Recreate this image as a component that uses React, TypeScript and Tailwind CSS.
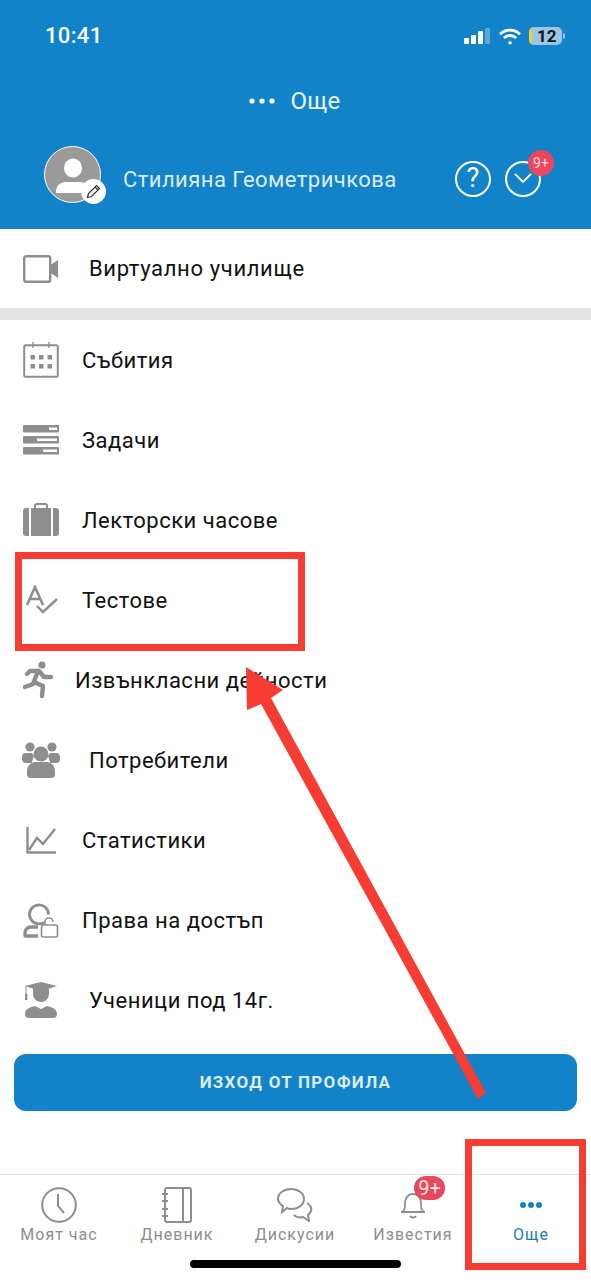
import React from "react";

const G = "#8e8e8e";

function Row({ icon, label, ml = "ml-[22px]" }: { icon: React.ReactNode; label: string; ml?: string }) {
  return (
    <div className="flex h-20 items-center pl-[22px]">
      <div className="flex w-[38px] shrink-0 items-center justify-center">{icon}</div>
      <span className={`${ml} pt-[2px] text-[22px] leading-none text-[#111] tracking-[0.5px]`}>{label}</span>
    </div>
  );
}

const Calendar = () => (
  <svg width="36" height="36" viewBox="0 0 36 36" fill="none">
    <rect x="1.2" y="3.2" width="33.6" height="31.6" rx="1.5" stroke={G} strokeWidth="2" />
    <path d="M10 0v6M26 0v6" stroke={G} strokeWidth="1.4" />
    {[7.5, 16, 24.5].map((x) => [13, 22].map((y) => <rect key={`${x}-${y}`} x={x} y={y} width="4.5" height="4.5" fill={G} />))}
  </svg>
);
const Tasks = () => (
  <svg width="36" height="30" viewBox="0 0 36 30" fill={G}>
    <rect y="0" width="36" height="7.5" rx="1" />
    <rect y="11" width="36" height="7.5" rx="1" />
    <rect y="22" width="36" height="7.5" rx="1" />
    <rect x="26" y="2.5" width="8" height="2.5" fill="#fff" />
    <rect x="14" y="13.5" width="20" height="2.5" fill="#fff" />
    <rect x="20" y="24.5" width="14" height="2.5" fill="#fff" />
  </svg>
);
const Case = () => (
  <svg width="36" height="34" viewBox="0 0 36 34" fill={G}>
    <path d="M12 6V3a2 2 0 0 1 2-2h8a2 2 0 0 1 2 2v3" fill="none" stroke={G} strokeWidth="2" />
    <path d="M3 5h3v28H3a3 3 0 0 1-3-3V8a3 3 0 0 1 3-3zM8 5h20v28H8zM30 5h3a3 3 0 0 1 3 3v22a3 3 0 0 1-3 3h-3z" />
  </svg>
);
const Spell = () => (
  <svg width="38" height="30" viewBox="0 0 38 30" fill="none" stroke={G}>
    <path d="M5 20 13 2l8 18M8 14h10" strokeWidth="2.6" />
    <path d="M15 21l6 6L35 14" strokeWidth="2.4" />
  </svg>
);
const Runner = () => (
  <svg width="38" height="38" viewBox="0 0 38 38" fill="none" stroke={G} strokeWidth="4.4" strokeLinecap="round" strokeLinejoin="round">
    <circle cx="20" cy="4" r="3.6" fill={G} stroke="none" />
    <path d="M5 13l3-3h9l5 6h7" />
    <path d="M16 10l-5 13-8 3" />
    <path d="M12 21l9 4-1 10" />
  </svg>
);
const Users = () => (
  <svg width="38" height="36" viewBox="0 0 38 36" fill={G}>
    <circle cx="8" cy="5" r="4.6" />
    <circle cx="30" cy="5" r="4.6" />
    <path d="M4 11h6l2 3-2 6v1H4a4 4 0 0 1-4-4v-2a4 4 0 0 1 4-4zM28 11h6a4 4 0 0 1 4 4v2a4 4 0 0 1-4 4h-6v-1l-2-6z" />
    <circle cx="19" cy="12" r="7.5" />
    <path d="M9 36a4 4 0 0 1-4-4v-3c0-6 5-9 9-9h10c4 0 9 3 9 9v3a4 4 0 0 1-4 4z" />
  </svg>
);
const Chart = () => (
  <svg width="30" height="27" viewBox="0 0 30 27" fill="none" stroke={G} strokeWidth="2.4">
    <path d="M1.5 0v25.5H30" />
    <path d="M3 23l8-12 6 6L29 2" />
  </svg>
);
const Access = () => (
  <svg width="36" height="36" viewBox="0 0 36 36" fill="none" stroke={G}>
    <path d="M21 20.5a9.5 9.5 0 1 1 4.5-8" strokeWidth="2.8" />
    <path d="M15 25H8c-3.500 0-6 2.500-6 6v2.500a.5.5 0 0 0 .5.5H15" strokeWidth="3.4" />
    <rect x="18.500" y="23" width="16" height="12" rx="2" strokeWidth="1.6" />
    <path d="M22 23v-3a4 4 0 0 1 8 0" strokeWidth="1.6" />
  </svg>
);
const Grad = () => (
  <svg width="32" height="36" viewBox="0 0 32 36" fill={G}>
    <path d="M0 4 16 0l16 4-9 3H9z" />
    <path d="M1 4v9" stroke={G} strokeWidth="1" />
    <rect x="0" y="12" width="2.400" height="6" />
    <path d="M8 7h16v5a8 8 0 0 1-16 0z" />
    <path d="M4 36a4 4 0 0 1-4-4c0-5 5-7 10-8l6 3 6-3c5 1 10 3 10 8a4 4 0 0 1-4 4z" />
  </svg>
);

function Tab({ icon, label, blue }: { icon: React.ReactNode; label: string; blue?: boolean }) {
  return (
    <div className="flex w-[118px] flex-col items-center">
      <div className="flex h-[40px] items-center justify-center">{icon}</div>
      <span className={`text-[16px] leading-5 tracking-[1px] ${blue ? "text-[#1a7cb8]" : "text-[#8d8d8d]"}`}>{label}</span>
    </div>
  );
}

export default function App() {
  return (
    <div className="relative h-[1280px] w-[591px] overflow-hidden bg-white font-['Roboto','Liberation_Sans',sans-serif]">
      <header className="h-[229px] bg-[#1283c9] text-white">
        <div className="flex items-center justify-between pl-[45px] pr-[26px] pt-[23px]">
          <span className="text-[22px] font-medium leading-[26px] tracking-[0.35px]">10:41</span>
          <div className="flex items-center gap-[7px]">
            <svg width="27" height="16" viewBox="0 0 27 16" fill="#fff">
              <rect x="0" y="10" width="5" height="6" rx="1" />
              <rect x="7" y="7" width="5" height="9" rx="1" />
              <rect x="14" y="3" width="5" height="13" rx="1" />
              <rect x="21" y="0" width="5" height="16" rx="1" fill="#5aa7d8" />
            </svg>
            <svg width="24" height="17" viewBox="0 0 24 18" fill="none" stroke="#fff" strokeWidth="3">
              <path d="M1.500 6.500a15 15 0 0 1 21 0M5.500 10.500a9.500 9.500 0 0 1 13 0" />
              <circle cx="12" cy="15.500" r="1.600" fill="#fff" strokeWidth="0.5" />
            </svg>
            <div className="flex items-center gap-[1px]">
              <div className="relative flex h-[18px] w-[33px] items-center overflow-hidden rounded-[5px] bg-[#9dc5e4] pl-[8px] text-[17px] font-bold leading-none text-[#101820]">
                <span className="absolute bottom-0 left-0 top-0 w-[3px] bg-[#f5cf2b]" />
                12
              </div>
              <span className="h-[6px] w-[2px] rounded-r-full bg-[#9dc5e4]" />
            </div>
          </div>
        </div>
        <div className="mt-[37px] flex items-center justify-center pr-[2px]">
          <svg width="28" height="8" viewBox="0 0 28 8" fill="#fff">
            <circle cx="4" cy="4" r="2.600" />
            <circle cx="14" cy="4" r="2.600" />
            <circle cx="24" cy="4" r="2.600" />
          </svg>
          <span className="ml-[14px] text-[24px] leading-[30px] tracking-[0.3px] text-[#e8f3fa]">Още</span>
        </div>
        <div className="mt-[30px] flex items-center pl-[44px]">
          <div className="relative h-[57px] w-[57px] shrink-0">
            <div className="h-[57px] w-[57px] overflow-hidden rounded-full border border-white bg-[#9a9a9a]">
              <svg width="55" height="55" viewBox="0 0 55 55" fill="#fff">
                <ellipse cx="28" cy="21" rx="9" ry="9.500" />
                <path d="M11 45c0-8 6-10 11-10h12c5 0 11 2 11 10v1H11z" />
              </svg>
            </div>
            <div className="absolute bottom-[-1px] right-[-5px] flex h-[25px] w-[25px] items-center justify-center rounded-full bg-white">
              <svg width="15" height="15" viewBox="0 0 15 15" fill="none" stroke="#333" strokeWidth="1.200">
                <path d="M1.500 13.500l1-4L10.500 1.500l3 3-8 8zM9 3l3 3" />
              </svg>
            </div>
          </div>
          <span className="ml-[22px] mt-[10px] w-[273px] whitespace-nowrap text-[22px] leading-7 tracking-[0.45px] text-[#dcedf8]">Стилияна Геометричкова</span>
          <div className="ml-[59px] mt-[8px] flex h-[36px] w-[36px] items-center justify-center rounded-full border-2 border-white text-[27px] font-normal leading-none">?</div>
          <div className="relative ml-[14px] mt-[8px] flex h-[36px] w-[36px] items-center justify-center rounded-full border-2 border-white">
            <svg width="18" height="11" viewBox="0 0 18 11" fill="none" stroke="#fff" strokeWidth="1.800">
              <path d="M1 1l8 8 8-8" />
            </svg>
            <span className="absolute right-[-15px] top-[-13px] flex h-[26px] w-[26px] items-center justify-center rounded-full bg-[#e8485c] text-[14px] leading-none text-[#f6d5d9]">9+</span>
          </div>
        </div>
      </header>

      <div className="flex h-[79px] items-center pl-[23px]">
        <svg width="36" height="28" viewBox="0 0 36 28" fill="none" stroke={G} strokeWidth="2.400">
          <rect x="1.200" y="1.200" width="26" height="25.600" rx="2" />
          <path d="M28 11l6-4v14l-6-4z" strokeWidth="2.200" fill={G} />
        </svg>
        <span className="ml-[30px] text-[22px] leading-none tracking-[0.65px] text-[#111]">Виртуално училище</span>
      </div>
      <div className="h-3 bg-[#e4e4e4]" />

      <Row icon={<Calendar />} label="Събития" />
      <Row icon={<Tasks />} label="Задачи" />
      <Row icon={<Case />} label="Лекторски часове" />
      <Row icon={<Spell />} label="Тестове" />
      <Row icon={<Runner />} label="Извънкласни дейности" ml="ml-[15px]" />
      <Row icon={<Users />} label="Потребители" ml="ml-[29px]" />
      <Row icon={<Chart />} label="Статистики" />
      <Row icon={<Access />} label="Права на достъп" />
      <Row icon={<Grad />} label="Ученици под 14г." ml="ml-[29px]" />

      <div className="mx-[14px] mt-[14px] flex h-[57px] items-center justify-center rounded-[12px] bg-[#1283c9] text-[17px] font-bold tracking-[1.3px] text-[#dcedf8]">
        ИЗХОД ОТ ПРОФИЛА
      </div>

      <nav className="mt-[63px] flex h-[106px] border-t border-[#dfdfdf] pt-[10px]">
        <Tab
          label="Моят час"
          icon={
            <svg width="36" height="36" viewBox="0 0 36 36" fill="none" stroke={G} strokeWidth="2">
              <circle cx="18" cy="18" r="16.800" />
              <path d="M17 7v12l6 7" />
            </svg>
          }
        />
        <Tab
          label="Дневник"
          icon={
            <svg width="30" height="36" viewBox="0 0 30 36" fill="none" stroke={G} strokeWidth="2">
              <rect x="3" y="1" width="26" height="34" rx="2" />
              <path d="M21 1v34M0 7h6M0 14h6M0 22h6M0 29h6" />
            </svg>
          }
        />
        <Tab
          label="Дискусии"
          icon={
            <svg width="36" height="34" viewBox="0 0 36 34" fill="none" stroke={G} strokeWidth="2">
              <path d="M14 1c7 0 13 4 13 10s-6 10-13 10c-2 0-3 0-4-1l-5 4 1-6c-3-2-5-4-5-7C1 5 7 1 14 1z" />
              <path d="M30 15c3 2 5 5 4 8-1 2-2 3-3 4l1 6-6-4c-3 1-7 0-9-2" />
            </svg>
          }
        />
        <Tab
          label="Известия"
          icon={
            <div className="relative">
              <svg width="24" height="28" viewBox="0 0 24 28" fill="none" stroke={G} strokeWidth="1.800">
                <path d="M1 21c3-2 3-4 3-9 0-5 3-9 8-9s8 4 8 9c0 5 0 7 3 9zM9 25c1 2 5 2 6 0" />
              </svg>
              <span className="absolute left-[13px] top-[-15px] flex h-[24px] w-[31px] items-center justify-center rounded-full bg-[#e8485c] text-[20px] leading-none text-[#fbe3e5]">9+</span>
            </div>
          }
        />
        <Tab
          label="Още"
          blue
          icon={
            <svg width="24" height="8" viewBox="0 0 24 8" fill="#1283c9">
              <circle cx="4" cy="4" r="3" />
              <circle cx="12" cy="4" r="3" />
              <circle cx="20" cy="4" r="3" />
            </svg>
          }
        />
      </nav>

      <div className="absolute bottom-[12px] left-[190px] h-[8px] w-[211px] rounded-full bg-black" />
      <div className="absolute left-[15px] top-[552px] h-[99px] w-[290px] border-[7px] border-[#f73c33]" />
      <div className="absolute left-[465px] top-[1139px] h-[131px] w-[121px] border-[7px] border-[#f73c33]" />
      <svg className="absolute left-0 top-0" width="591" height="1280" viewBox="0 0 591 1280" fill="#f73c33">
        <path d="M246 667 L283 690 L271 698 L486 1093 L478 1099 L261 704 L247 710 Z" />
      </svg>
    </div>
  );
}
